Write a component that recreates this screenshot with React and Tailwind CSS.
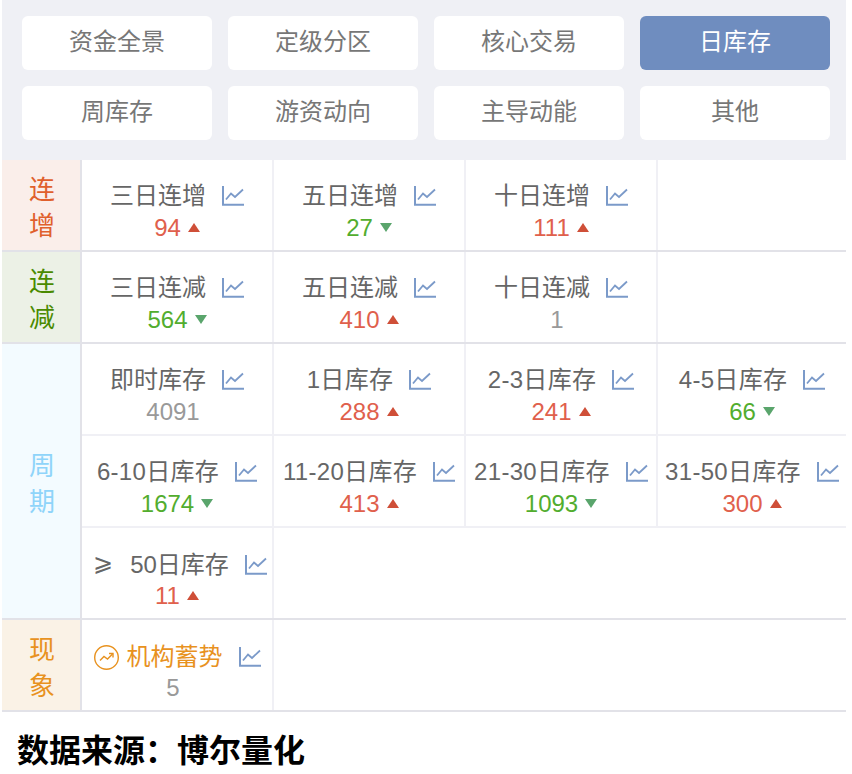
const font = { fontFamily: '"Liberation Sans","Noto Sans CJK SC",sans-serif' };

const ChartIcon = () => (
  <svg width="22" height="20" viewBox="0 0 22 20" fill="none" stroke="#7b9ac9" className="shrink-0">
    <path d="M1 0V18.8H22" strokeWidth="2" />
    <path d="M4 13.5L9 7.5L13 11L21 3.5" strokeWidth="1.8" />
  </svg>
);

const TrendCircle = () => (
  <svg width="25" height="25" viewBox="0 0 25 25" fill="none" stroke="#e8921f" strokeWidth="1.4" className="shrink-0">
    <circle cx="12.5" cy="12.5" r="11.8" />
    <path d="M6 15.5L10 11.5L13.5 14L18.5 9" />
    <path d="M15 8.5H19V12.5" />
  </svg>
);

const Num = ({ v, dir, shift }) => {
  const color = dir === 'up' ? 'text-[#e0604c]' : dir === 'down' ? 'text-[#52ad2e]' : 'text-[#999999]';
  return (
    <div className={`flex items-center justify-center h-[32px] text-[24px] leading-[32px] ${shift ? '-mt-[1px]' : ''} ${color}`}>
      <span>{v}</span>
      {dir === 'up' && <span className="ml-[7px] w-0 h-0 border-x-[6px] border-x-transparent border-b-[9px] border-b-[#cf4f38] -mt-[1px]" />}
      {dir === 'down' && <span className="ml-[7px] w-0 h-0 border-x-[6px] border-x-transparent border-t-[9px] border-t-[#5aa56c] -mt-[1px]" />}
      {!dir && <span className="w-[8px]" />}
    </div>
  );
};

const Cell = ({ t, v, dir, last, pt = 'pt-[20px]', orange, ge, latin, shift }) => (
  <div className={`h-full ${last ? '' : 'border-r-2 border-r-[#f0f0f5]'} ${pt} flex flex-col min-w-0`}>
    <div className={`flex items-center justify-center h-[32px] whitespace-nowrap ${ge ? 'pl-[6px]' : ''}`}>
      {orange && <span className="mr-[8px] flex"><TrendCircle /></span>}
      {ge && <span className="text-[24px] leading-[32px] text-[#666666] mr-[17px] relative -top-[2px]">⩾</span>}
      <span className={`text-[24px] leading-[32px] ${latin ? 'tracking-[0.3px]' : ''} ${orange ? 'text-[#e8921f]' : 'text-[#666666]'}`}>{t}</span>
      <span className="ml-[16px] flex"><ChartIcon /></span>
    </div>
    <Num v={v} dir={dir} shift={shift} />
  </div>
);

const Row = ({ children, border }) => (
  <div className={`grid grid-cols-[192px_192px_192px_188px] h-[92px] ${border ? 'border-b-2 border-b-[#f0f0f5]' : ''}`}>{children}</div>
);

const Section = ({ chars, color, bg, children }) => (
  <div className="flex border-b-2 border-b-[#e2e2e8]">
    <div className={`w-[80px] shrink-0 border-r-2 border-r-[#e2e2e8] pt-[6px] pl-[2px] flex flex-col items-center justify-center text-[26px] leading-[36px] ${color} ${bg}`}>
      {chars.map((c) => <span key={c}>{c}</span>)}
    </div>
    <div className="flex-1 flex flex-col">{children}</div>
  </div>
);

const tabs = ['资金全景', '定级分区', '核心交易', '日库存', '周库存', '游资动向', '主导动能', '其他'];

export default function App() {
  return (
    <div className="w-[852px] h-[774px] overflow-hidden bg-white pl-[2px] pr-[6px]" style={font}>
      <div className="bg-[#eff0f5] h-[160px] pl-[20px] pr-[16px] py-[16px] grid grid-cols-[190px_190px_190px_190px] gap-x-[16px] gap-y-[16px] grid-rows-[54px_54px]">
        {tabs.map((t) => (
          <div key={t} className={`rounded-[6px] pb-[2px] flex items-center justify-center text-[24px] ${t === '日库存' ? 'bg-[#6f8dbf] text-white' : 'bg-white text-[#777777]'}`}>{t}</div>
        ))}
      </div>
      <Section chars={['连', '增']} color="text-[#e0602d]" bg="bg-[#faeeea]">
        <div className="grid grid-cols-[192px_192px_192px_188px] h-[90px]">
          <Cell t="三日连增" v="94" dir="up" />
          <Cell t="五日连增" v="27" dir="down" />
          <Cell t="十日连增" v="111" dir="up" />
          <div />
        </div>
      </Section>
      <Section chars={['连', '减']} color="text-[#4a8a00]" bg="bg-[#ecf1e6]">
        <div className="grid grid-cols-[192px_192px_192px_188px] h-[90px]">
          <Cell t="三日连减" v="564" dir="down" />
          <Cell t="五日连减" v="410" dir="up" />
          <Cell t="十日连减" v="1" />
          <div />
        </div>
      </Section>
      <Section chars={['周', '期']} color="text-[#8fd4fa]" bg="bg-[#f3fbff]">
        <Row border>
          <Cell t="即时库存" v="4091" />
          <Cell t="1日库存" v="288" dir="up" latin />
          <Cell t="2-3日库存" v="241" dir="up" latin />
          <Cell t="4-5日库存" v="66" dir="down" last latin />
        </Row>
        <Row border>
          <Cell t="6-10日库存" v="1674" dir="down" latin />
          <Cell t="11-20日库存" v="413" dir="up" latin />
          <Cell t="21-30日库存" v="1093" dir="down" latin />
          <Cell t="31-50日库存" v="300" dir="up" last latin />
        </Row>
        <div className="grid grid-cols-[192px_192px_192px_188px] h-[90px]">
          <Cell t="50日库存" v="11" dir="up" ge pt="pt-[21px]" shift />
        </div>
      </Section>
      <Section chars={['现', '象']} color="text-[#e8921f]" bg="bg-[#faf2e6]">
        <div className="grid grid-cols-[192px_192px_192px_188px] h-[90px]">
          <Cell t="机构蓄势" v="5" orange pt="pt-[21px]" shift />
        </div>
      </Section>
      <div className="pl-[15px] pt-[18px] text-[32px] leading-[42px] font-bold text-black whitespace-nowrap">数据来源：博尔量化</div>
    </div>
  );
}
